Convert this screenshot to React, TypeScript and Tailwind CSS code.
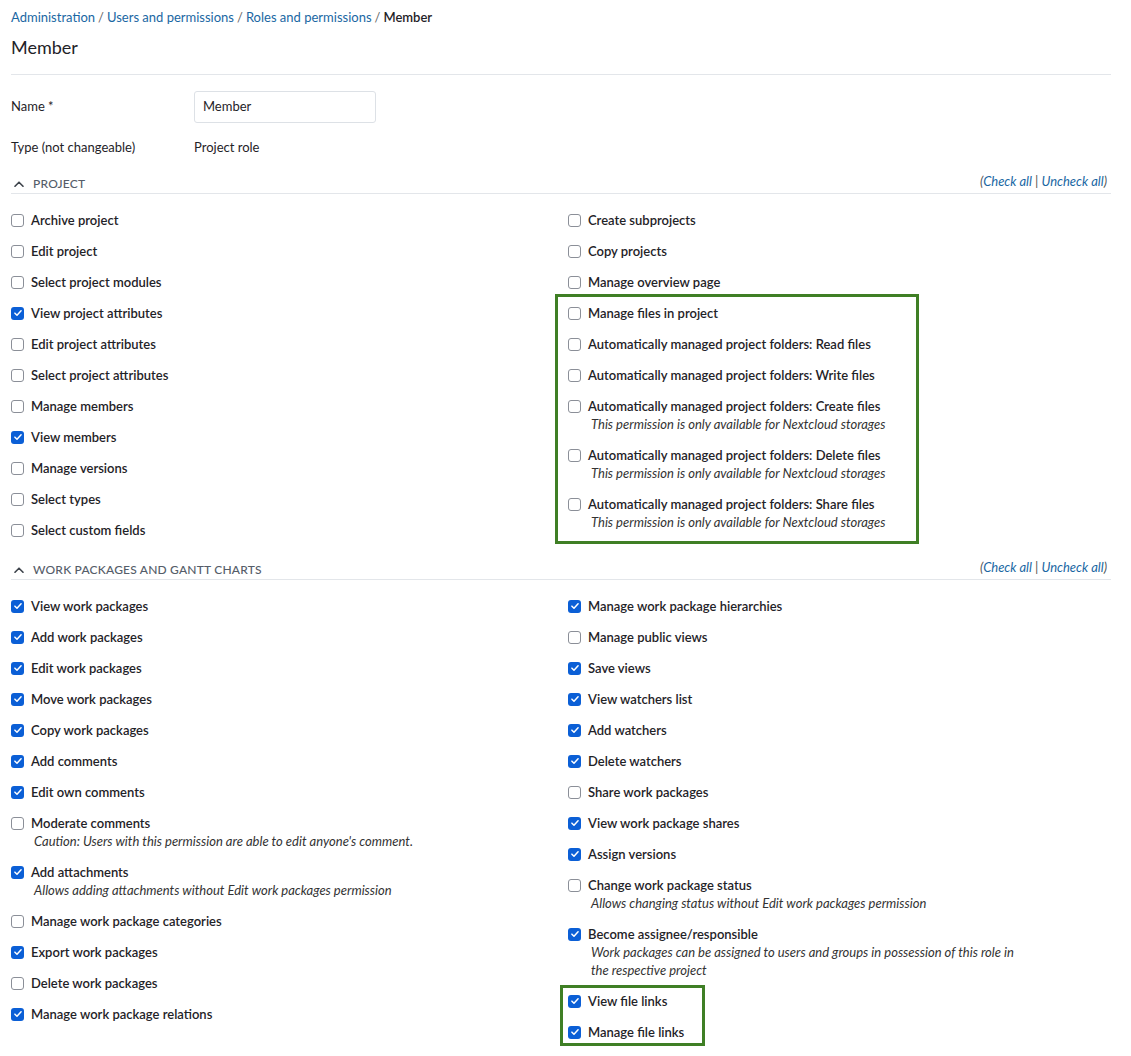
import type { ReactNode } from 'react'

type Perm = { label: string; checked?: boolean; desc?: string }

const PROJECT_LEFT: Perm[] = [
  { label: 'Archive project' },
  { label: 'Edit project' },
  { label: 'Select project modules' },
  { label: 'View project attributes', checked: true },
  { label: 'Edit project attributes' },
  { label: 'Select project attributes' },
  { label: 'Manage members' },
  { label: 'View members', checked: true },
  { label: 'Manage versions' },
  { label: 'Select types' },
  { label: 'Select custom fields' },
]

const PROJECT_RIGHT: Perm[] = [
  { label: 'Create subprojects' },
  { label: 'Copy projects' },
  { label: 'Manage overview page' },
]

const NEXTCLOUD = 'This permission is only available for Nextcloud storages'

const PROJECT_FILES: Perm[] = [
  { label: 'Manage files in project' },
  { label: 'Automatically managed project folders: Read files' },
  { label: 'Automatically managed project folders: Write files' },
  { label: 'Automatically managed project folders: Create files', desc: NEXTCLOUD },
  { label: 'Automatically managed project folders: Delete files', desc: NEXTCLOUD },
  { label: 'Automatically managed project folders: Share files', desc: NEXTCLOUD },
]

const WP_LEFT: Perm[] = [
  { label: 'View work packages', checked: true },
  { label: 'Add work packages', checked: true },
  { label: 'Edit work packages', checked: true },
  { label: 'Move work packages', checked: true },
  { label: 'Copy work packages', checked: true },
  { label: 'Add comments', checked: true },
  { label: 'Edit own comments', checked: true },
  { label: 'Moderate comments', desc: "Caution: Users with this permission are able to edit anyone's comment." },
  { label: 'Add attachments', checked: true, desc: 'Allows adding attachments without Edit work packages permission' },
  { label: 'Manage work package categories' },
  { label: 'Export work packages', checked: true },
  { label: 'Delete work packages' },
  { label: 'Manage work package relations', checked: true },
]

const WP_RIGHT: Perm[] = [
  { label: 'Manage work package hierarchies', checked: true },
  { label: 'Manage public views' },
  { label: 'Save views', checked: true },
  { label: 'View watchers list', checked: true },
  { label: 'Add watchers', checked: true },
  { label: 'Delete watchers', checked: true },
  { label: 'Share work packages' },
  { label: 'View work package shares', checked: true },
  { label: 'Assign versions', checked: true },
  { label: 'Change work package status', desc: 'Allows changing status without Edit work packages permission' },
  {
    label: 'Become assignee/responsible',
    checked: true,
    desc: 'Work packages can be assigned to users and groups in possession of this role in the respective project',
  },
]

const WP_FILES: Perm[] = [
  { label: 'View file links', checked: true },
  { label: 'Manage file links', checked: true },
]

function Checkbox({ checked }: { checked?: boolean }) {
  if (checked) {
    return (
      <span className="flex h-[13px] w-[13px] shrink-0 items-center justify-center rounded-[3px] bg-[#0b5fd6]">
        <svg viewBox="0 0 12 12" className="h-[10px] w-[10px]" fill="none">
          <path d="M2.3 6.2 4.8 8.6 9.7 3.4" stroke="white" strokeWidth="1.8" strokeLinecap="round" strokeLinejoin="round" />
        </svg>
      </span>
    )
  }
  return <span className="h-[13px] w-[13px] shrink-0 rounded-[3px] border border-[#8b8f98] bg-white" />
}

function PermItem({ p }: { p: Perm }) {
  return (
    <div className="flex flex-col">
      <label className="flex h-[18px] items-center gap-[7px]">
        <Checkbox checked={p.checked} />
        <span className="text-[13px] font-semibold leading-[18px] text-[#1f2328]">{p.label}</span>
      </label>
      {p.desc && (
        <p className="max-w-[457px] pl-[23px] text-[13px] italic leading-[18px] text-[#333]">{p.desc}</p>
      )}
    </div>
  )
}

function PermList({ items }: { items: Perm[] }) {
  return (
    <>
      {items.map((p) => (
        <PermItem key={p.label} p={p} />
      ))}
    </>
  )
}

function Highlight({ children, box }: { children: ReactNode; box: string }) {
  return (
    <div className="relative flex flex-col gap-[13px]">
      {children}
      <div className={`pointer-events-none absolute border-[3px] border-[#3f7f25] ${box}`} />
    </div>
  )
}

function SectionHeader({ title }: { title: string }) {
  return (
    <div className="flex h-[21px] items-start justify-between border-b border-[#e3e6ea]">
      <div className="flex items-center gap-[9px] pl-[3px] pt-[3px]">
        <svg viewBox="0 0 10 6" className="h-[6px] w-[10px]" fill="none">
          <path d="M1 5.2 5 1.2 9 5.2" stroke="#3d434b" strokeWidth="1.6" strokeLinecap="round" strokeLinejoin="round" />
        </svg>
        <span className="text-[12px] font-medium uppercase leading-[16px] tracking-[0.2px] text-[#555d69]">{title}</span>
      </div>
      <div className="pr-[4px] text-[13px] italic leading-[16px] text-[#555]">
        (<a className="text-[#1a67a3]">Check all</a> | <a className="text-[#1a67a3]">Uncheck all</a>)
      </div>
    </div>
  )
}

export default function App() {
  return (
    <div className="min-h-[1056px] bg-white pl-[11px] pr-[20px] pt-[8px] font-['Lato',_'Noto_Sans',_sans-serif] text-[#1f2328]">
      {/* Breadcrumb */}
      <div className="flex items-center gap-[3px] text-[13px] leading-[18px]">
        <a className="text-[#1a67a3]">Administration</a>
        <span className="text-[#666]">/</span>
        <a className="text-[#1a67a3]">Users and permissions</a>
        <span className="text-[#666]">/</span>
        <a className="text-[#1a67a3]">Roles and permissions</a>
        <span className="text-[#666]">/</span>
        <span className="font-semibold">Member</span>
      </div>
      <h2 className="mt-[9px] text-[18px] leading-[24px]">Member</h2>
      <div className="mt-[15px] h-px bg-[#e3e6ea]" />

      {/* Form */}
      <div className="mt-[16px] flex items-center text-[13px]">
        <span className="w-[183px]">Name *</span>
        <div className="flex h-[32px] w-[182px] items-center rounded-[3px] border border-[#dde1e6] px-[8px]">Member</div>
      </div>
      <div className="mt-[15px] flex h-[20px] items-center text-[13px]">
        <span className="w-[183px]">Type (not changeable)</span>
        <span>Project role</span>
      </div>

      {/* Project */}
      <div className="mt-[15px]">
        <SectionHeader title="Project" />
        <div className="mt-[17px] grid grid-cols-[557px_1fr]">
          <div className="flex flex-col gap-[13px]">
            <PermList items={PROJECT_LEFT} />
          </div>
          <div className="flex flex-col gap-[13px]">
            <PermList items={PROJECT_RIGHT} />
            <Highlight box="-left-[13px] -top-[10px] -bottom-[13px] w-[364px]">
              <PermList items={PROJECT_FILES} />
            </Highlight>
          </div>
        </div>
      </div>

      {/* Work packages */}
      <div className="mt-[20px]">
        <SectionHeader title="Work packages and Gantt charts" />
        <div className="mt-[17px] grid grid-cols-[557px_1fr]">
          <div className="flex flex-col gap-[13px]">
            <PermList items={WP_LEFT} />
          </div>
          <div className="flex flex-col gap-[13px]">
            <PermList items={WP_RIGHT} />
            <Highlight box="-left-[8px] -top-[7px] -bottom-[5px] w-[145px]">
              <PermList items={WP_FILES} />
            </Highlight>
          </div>
        </div>
      </div>
    </div>
  )
}
